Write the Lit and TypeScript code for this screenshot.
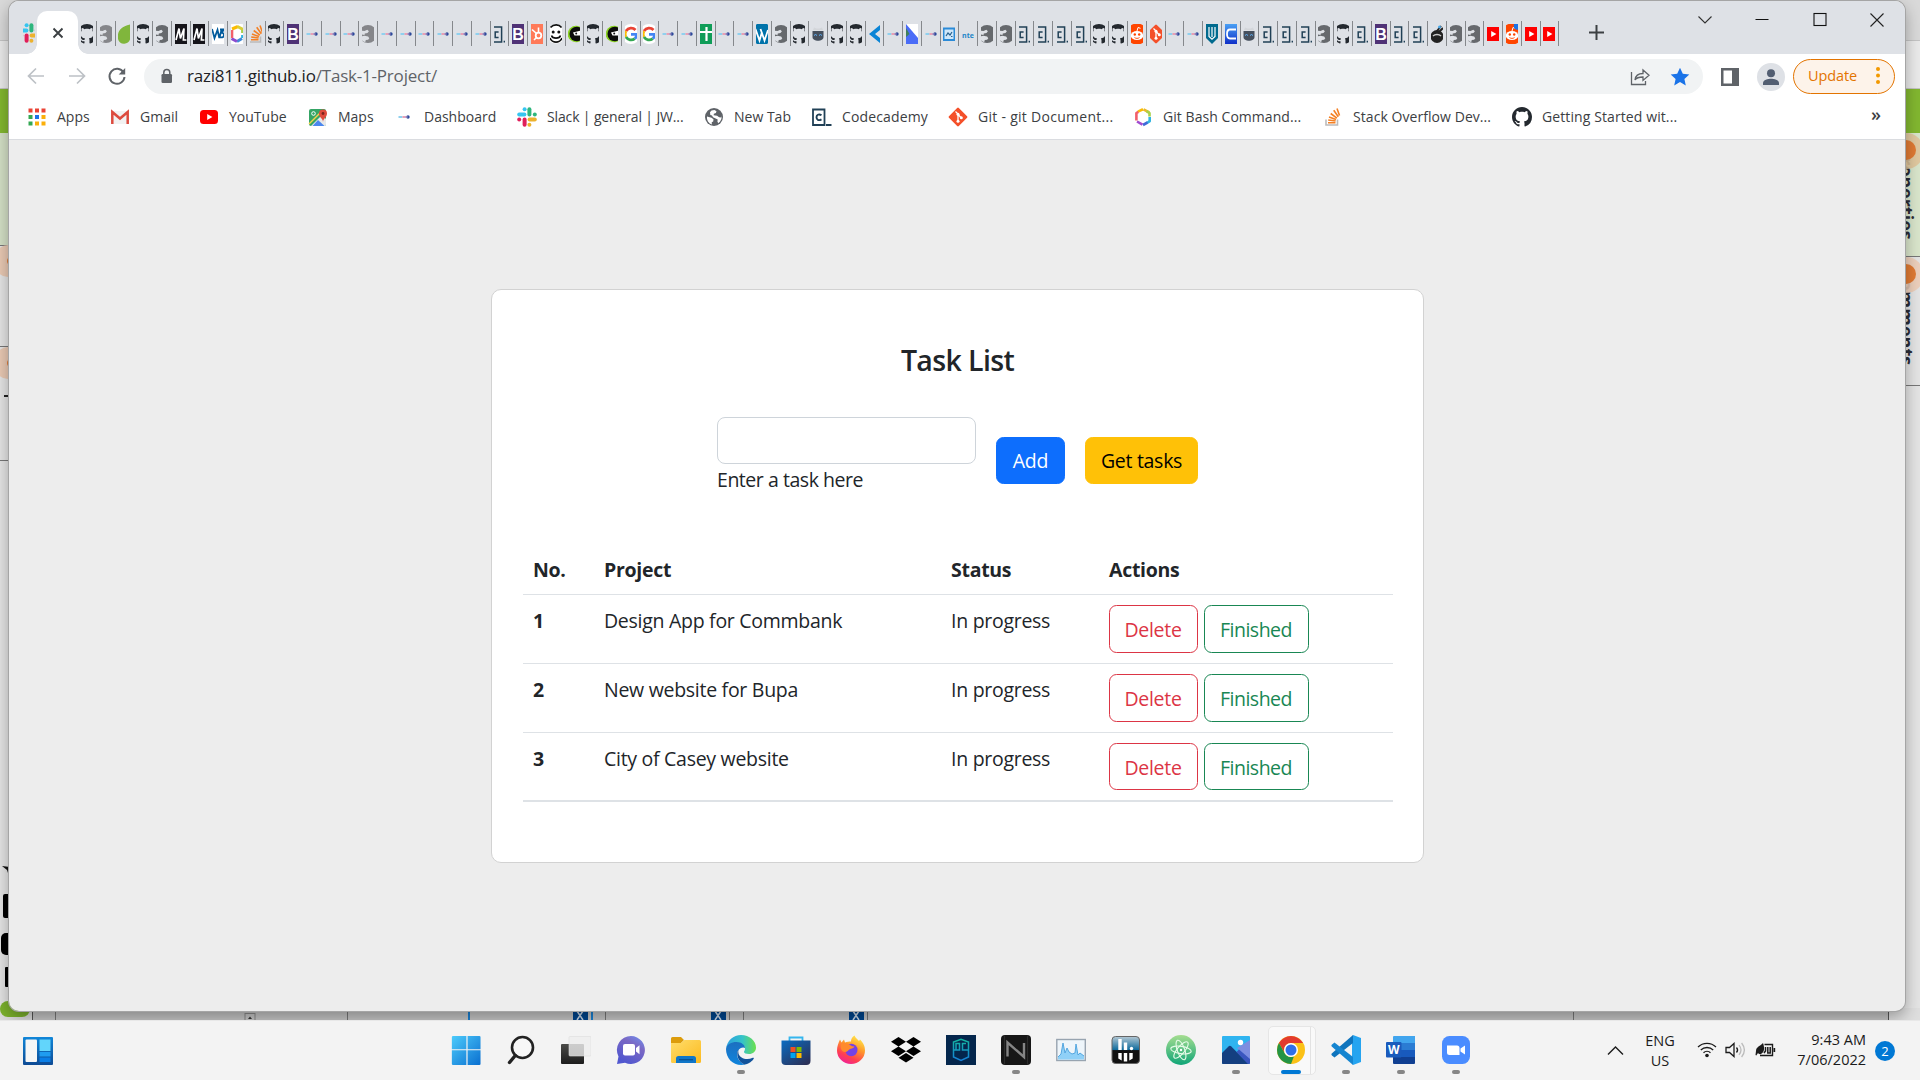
import { LitElement, html, css, svg } from "lit";
import { customElement, state } from "lit/decorators.js";
import { classMap } from "lit/directives/class-map.js";
import { styleMap } from "lit/directives/style-map.js";

const S = (body: unknown, w = 20, h = w, vb = `0 0 ${w} ${h}`) =>
  html`<svg width=${w} height=${h} viewBox=${vb} fill="none">${body}</svg>`;

const catPath =
  "M8 0C3.58 0 0 3.58 0 8c0 3.54 2.29 6.53 5.47 7.59.4.07.55-.17.55-.38 0-.19-.01-.82-.01-1.49-2.01.37-2.53-.49-2.69-.94-.09-.23-.48-.94-.82-1.13-.28-.15-.68-.52-.01-.53.63-.01 1.08.58 1.23.82.72 1.21 1.87.87 2.33.66.07-.52.28-.87.51-1.07-1.78-.2-3.64-.89-3.64-3.95 0-.87.31-1.59.82-2.15-.08-.2-.36-1.02.08-2.12 0 0 .67-.21 2.2.82.64-.18 1.32-.27 2-.27.68 0 1.36.09 2 .27 1.53-1.04 2.2-.82 2.2-.82.44 1.1.16 1.92.08 2.12.51.56.82 1.27.82 2.15 0 3.07-1.87 3.75-3.65 3.95.29.25.54.73.54 1.48 0 1.07-.01 1.93-.01 2.2 0 .21.15.46.55.38A8.013 8.013 0 0 0 16 8c0-4.42-3.58-8-8-8z";

const globe = (c: string) => svg`
  <circle cx="10" cy="10" r="9" fill=${c}/>
  <path d="M3 9.500l4.500 1.200 2 1.600-.3 2.200-1.500.8.200 2.200C5 16.500 2.500 13.500 3 9.500z" fill="#fff"/>
  <path d="M6 5.200l1.500-1.700 3-.6 2 1.300-.6 1.800-2 .8-.3 1.500 3.500.5 2 1.500 2.400.2.300-2.500c.3 3.500-1 6.500-3.600 8.300l-.8-1.800.3-2-2-.9-2.700-1.300-1-1.800-1.700-.6z" fill="#fff"/>`;

/* Narrow-tab globe: the land reads as two notches cut from the left. */
const globeTab = (c: string) => svg`
  <circle cx="10" cy="10" r="9" fill=${c}/>
  <path d="M3 6.500l3.500.6 2.800-1.300 1.600 1.400-1.400 1.900-2.700.5-.3 1.400-3.500-.6z" fill="#dee1e6"/>
  <path d="M3 12.500l3.500-.8 3.600.9 1.200 1.600-1.200 1.600-2.300.2-.6 2.200L3 16z" fill="#dee1e6"/>`;

const reddit = (extra: unknown) => svg`<circle cx="10" cy="10" r="10.500" fill="#ff4500"/><ellipse cx="10" cy="11.500" rx="6.200" ry="4.600" fill="#fff"/><circle cx="7.800" cy="10.500" r="1.200" fill="#ff4500"/><circle cx="12.200" cy="10.500" r="1.200" fill="#ff4500"/><path d="M10 7l1-3.500 2.500.8" stroke="#fff" stroke-width="1"/><path d="M7.500 13.500c1.500 1.200 3.500 1.200 5 0" stroke="#ff4500" stroke-width=".9"/>${extra}`;

const ICONS: Record<string, unknown> = {
  slack: svg`
    <path d="M2.200 7.400h5.200" stroke="#36c5f0" stroke-width="4" stroke-linecap="round"/><circle cx="7.600" cy="2.200" r="2" fill="#36c5f0"/>
    <path d="M12.400 2.200v5.200" stroke="#2eb67d" stroke-width="4" stroke-linecap="round"/><circle cx="17.800" cy="7.400" r="2" fill="#2eb67d"/>
    <path d="M12.600 12.600h5.200" stroke="#ecb22e" stroke-width="4" stroke-linecap="round"/><circle cx="12.400" cy="17.800" r="2" fill="#ecb22e"/>
    <path d="M7.600 12.600v5.200" stroke="#e01e5a" stroke-width="4" stroke-linecap="round"/><circle cx="2.200" cy="12.600" r="2" fill="#e01e5a"/>`,
  octo: svg`<path transform="scale(1.25)" d=${catPath} fill="#24292f"/>`,
  globe: globe("#5f6368"),
  globeT: globeTab("#66696d"),
  globeL: globeTab("#85868a"),
  leaf: svg`<path d="M16.500.5C6 3 3.500 8 3.800 13.500c.2 4 3 6.500 6.500 6.300 4-.2 6.300-3 6.200-8z" fill="#80b63c"/>`,
  m: svg`<rect width="20" height="20" fill="#15141a"/><path d="M5 16L8 4.500l1.400 10L13 4.500l-.6 11.500h3" stroke="#fff" stroke-width="1.700"/>`,
  w3: svg`<rect width="20" height="20" fill="#fff"/><path d="M4 5l2.500 9L9.500 6l1.800 8 2.500-9M12 5.500h4l-2.500 3.200c4 .3 2.500 6-1 4.500" stroke="#005a9c" stroke-width="1.800"/>`,
  hex: svg`<g stroke-width="2.600" stroke-linejoin="round">
    <path d="M10 2.300L5 4.600" stroke="#fbbc04"/><path d="M10.500 2.300l5.800 3.200" stroke="#e8b92b"/><path d="M13.500 4.200l3 1.800v3.500" stroke="#a8d14a"/>
    <path d="M16.700 10v4.200L14 16" stroke="#2fb4e0"/><path d="M14.500 15.500L10 18" stroke="#3f6ad8"/>
    <path d="M9.500 17.700L4 14.500" stroke="#a24ccf"/><path d="M3.400 13.500V6l2-1.200" stroke="#f2606a"/></g>`,
  hexT: svg`<rect width="20" height="20" rx="6" fill="#fff"/><g stroke-width="3">
    <path d="M11 2.500L5 5" stroke="#fbbc04"/><path d="M10.500 2.500l5.500 3" stroke="#d8cf3a"/>
    <path d="M15 14.500L10 17.500" stroke="#3f8ad8"/><path d="M10 17.500L4.500 14.500" stroke="#8a4ccf"/><path d="M4.800 14V6" stroke="#f2606a"/><path d="M15.600 6v3" stroke="#a8d14a"/><path d="M15.600 11v3" stroke="#2fb4e0"/></g>`,
  so: svg`<path d="M3 12.500V18h11.500v-5.500" stroke="#bcbbbb" stroke-width="1.600"/><path d="M5 15.700h7.500M5.200 13l7.400 1M6 10l7 2.600M7.700 6.500l6.200 4.600M10.700 3.200l4.600 6.500M14 1.500l2.500 7" stroke="#f48024" stroke-width="1.600"/>`,
  b: svg`<rect width="20" height="20" fill="#4f3276"/><text x="10" y="15.800" text-anchor="middle" class="gB">B</text>`,
  dash: svg`<path d="M4.500 10h4" stroke="#8fd0ee" stroke-width="1.800"/><path d="M8.500 10h3" stroke="#e9a0b4" stroke-width="1.800"/><circle cx="14" cy="10" r="1.700" fill="#2b4a9b"/><path d="M11 10h3" stroke="#9a7bb8" stroke-width="1"/>`,
  ca: svg`<path d="M1 2.500h11.500v15.500H1z" stroke="#204056" stroke-width="1.800"/><path d="M9.500 8.200C6.500 6.500 4.500 8 4.500 10.300s2 3.800 5 2.100" stroke="#204056" stroke-width="1.900"/><path d="M14 18h5.500" stroke="#204056" stroke-width="1.800"/>`,
  caT: svg`<path d="M5 3h7.600v15H5" stroke="#204056" stroke-width="1.500"/><path d="M9.600 8H6.200v5.500h3.400" stroke="#204056" stroke-width="1.500"/><path d="M14.600 17.600h1.400" stroke="#204056" stroke-width="1.600"/>`,
  hub: svg`<rect width="20" height="20" fill="#ff7a59"/><circle cx="11.500" cy="11.500" r="2.800" stroke="#fff" stroke-width="1.800"/><path d="M11.500 8.500V3.500M9.500 9.500L5 5.500M9.500 13.500L7 16" stroke="#fff" stroke-width="1.600"/>`,
  face: svg`<circle cx="10" cy="10" r="9.600" fill="#fff"/><path d="M4.500 3.500C7.500 0 13 0 15.500 3.500M4 14c2 5.500 10 5.500 12 0M5.500 11.500c1 3.500 8 3.500 9 0" stroke="#111" stroke-width="1.600"/><circle cx="7.200" cy="8" r="1.500" fill="#111"/><circle cx="12.800" cy="8" r="1.500" fill="#111"/>`,
  ninja: svg`<circle cx="12" cy="10" r="8.300" fill="#8ad024"/><circle cx="12.800" cy="10" r="7.300" fill="#0c0c0c"/><path d="M9 8.500L17 6.500v5h-6.500z" fill="#fff"/><circle cx="12.200" cy="9.500" r="1" fill="#111"/>`,
  g: svg`<circle cx="10" cy="10" r="10" fill="#fff"/><g stroke-width="2.800"><path d="M14.500 6A6 6 0 0 0 5 7" stroke="#ea4335"/><path d="M5 7a6 6 0 0 0 0 6" stroke="#fbbc04"/><path d="M5 13a6 6 0 0 0 8.800 1.700" stroke="#34a853"/><path d="M10 10.300h5.800c0 2-.8 3.400-2 4.400" stroke="#4285f4"/></g>`,
  sheets: svg`<rect width="20" height="20" fill="#0f9d58"/><path d="M10.500 3v14M4 8h12" stroke="#fff" stroke-width="2.200"/>`,
  wp: svg`<circle cx="10" cy="10" r="11" fill="#0073aa"/><path d="M3.500 5l4 11.500L10 8M8.500 5l4 11.500L16 6" stroke="#fff" stroke-width="1.800"/>`,
  cat: svg`<path d="M4.500 7h11v6c0 5-11 5-11 0z" fill="#46505e"/><path d="M5 6l1-2.500 2.500 1h3L14 3.500 15 6z" fill="#d3d6da"/><path d="M6 11.500l1.500-1 1.500 1M11 11.500l1.500-1 1.500 1" stroke="#5fb4ff"/>`,
  vs: svg`<path d="M16 1L5 10l11 9v-5l-5-4 5-4z" fill="#0a84d6"/>`,
  blue: svg`<rect x="4" width="12" height="20" fill="#fff"/><path d="M4 0l12 14v6H4z" fill="#4a6cf7"/><path d="M4 4l3.500 6L4 13z" fill="#3f7f5c"/>`,
  img: svg`<rect x="4.500" y="4.500" width="11" height="11.500" fill="#cfe7fa" stroke="#2b8bd8" stroke-width="2"/><path d="M7 12l2-3 2 2 2-3M12 12.500h1.500" stroke="#28618f" stroke-width="1.200"/>`,
  nte: svg`<text x="10" y="13.500" text-anchor="middle" class="gN">nte</text>`,
  reddit: reddit(""),
  redditN: reddit(svg`<circle cx="15.500" cy="2" r="3.800" fill="#1a73e8"/>`),
  git: svg`<rect x="3" y="3" width="14" height="14" rx="1.200" transform="rotate(45 10 10)" fill="#f4502a"/><path d="M7.500 4.500L10 7v8M10 7.500l3.200 3.200" stroke="#fff" stroke-width="1.300"/><circle cx="10" cy="7.300" r="1.500" fill="#fff"/><circle cx="10" cy="14.200" r="1.500" fill="#fff"/><circle cx="13.300" cy="10.700" r="1.500" fill="#fff"/>`,
  shield: svg`<path d="M4 0h12v14l-6 6-6-6z" fill="#006a8e"/><path d="M7 3v9.500l3 2.800 3-2.800V3" stroke="#fff" stroke-width="1.200"/><path d="M10 3v10" stroke="#fff" stroke-width="1.200"/>`,
  c: svg`<defs><linearGradient id="cg" x2="0" y2="1"><stop stop-color="#4aa0f4"/><stop offset="1" stop-color="#1030c8"/></linearGradient></defs><rect width="20" height="20" fill="url(#cg)"/><path d="M15 5.500H9C5 5.500 5 14.500 9 14.500h6" stroke="#fff" stroke-width="1.800"/>`,
  bug: svg`<circle cx="10" cy="12.500" r="6.500" fill="#222"/><path d="M6 12c2-2 6-2 8 0" stroke="#c9c9c9" stroke-width="1.500"/><path d="M10 7l4-5M12 8l4-4" stroke="#222" stroke-width="2"/><circle cx="12.500" cy="3" r="1.500" fill="#4aa8e8"/>`,
  yt: svg`<rect x="1" y="3" width="18" height="14" rx="3.500" fill="#f00"/><path d="M8.200 7l5.200 3-5.200 3z" fill="#fff"/>`,
  apps: svg`<g><path d="M1.500 1.500h4v4h-4zM8 1.500h4v4H8zM14.500 1.500h4v4h-4z" fill="#ea4335"/><path d="M1.500 8h4v4h-4zM1.500 14.500h4v4h-4z" fill="#34a853"/><path d="M8 8h4v4H8z" fill="#1a73e8"/><path d="M14.500 8h4v4h-4zM8 14.500h4v4H8zM14.500 14.500h4v4h-4z" fill="#fbaf0a"/></g>`,
  gmail: svg`<path d="M1 4h18v13H1z" fill="#f2f2f2"/><path d="M2.300 17V5l7.700 6.500L17.700 5v12" stroke="#dd4b3e" stroke-width="2.500"/>`,
  maps: svg`<rect x="1" y="2" width="17" height="17" rx="2" fill="#35a565"/><path d="M3 19L14 8l4 4v5c0 1.500-.6 2-2 2z" fill="#e8e8e8"/><path d="M4.500 19l5.500-6 6.500 6z" fill="#4b87ee"/><path d="M1 17L14 4" stroke="#f6d24a" stroke-width="1.500"/><path d="M15 15c0-3.500-4-4.500-4-8.500a4 4 0 0 1 8 0c0 4-4 5-4 8.500z" fill="#de4b3c"/><circle cx="15" cy="6.500" r="1.400" fill="#7b231d"/><circle cx="5.500" cy="6.500" r="1.800" stroke="#fff"/>`,
};

const TABS =
  "octo globeL leaf octo globeT m m w3 hexT so octo b dash dash dash globeL dash dash dash dash dash dash caT b hub face ninja octo ninja g g dash dash sheets dash dash wp globeT octo cat octo octo vs dash blue dash img nte globeT globeT caT caT caT caT octo octo reddit git dash dash shield c cat caT caT caT globeT octo caT b caT caT bug globeT globeT yt redditN yt yt".split(" ");

interface Mark { icon: string; label: string; spacing?: number }

const MARKS: Mark[] = [
  { icon: "apps", label: "Apps" },
  { icon: "gmail", label: "Gmail" },
  { icon: "yt", label: "YouTube" },
  { icon: "maps", label: "Maps" },
  { icon: "dash", label: "Dashboard" },
  { icon: "slack", label: "Slack | general | JW...", spacing: -0.14 },
  { icon: "globe", label: "New Tab" },
  { icon: "ca", label: "Codecademy", spacing: 0.14 },
  { icon: "git", label: "Git - git Document...", spacing: 0.28 },
  { icon: "hex", label: "Git Bash Command...", spacing: 0.05 },
  { icon: "so", label: "Stack Overflow Dev...", spacing: 0.06 },
  { icon: "octo", label: "Getting Started wit...", spacing: 0.1 },
];

const APPS: [string, unknown, string][] = [
  ["start", svg`<defs><linearGradient id="ws" x2="1" y2="1"><stop stop-color="#4ccbfb"/><stop offset="1" stop-color="#0a6fd0"/></linearGradient></defs><path d="M.5 2a1 1 0 0 1 1-1h10.900v13.300H.5zM13.400 1H23a1 1 0 0 1 1 1v12.300H13.400zM.5 15.300h11.900V30H1.500a1 1 0 0 1-1-1zM13.400 15.300H24V29a1 1 0 0 1-1 1h-9.600z" transform="translate(0 0) scale(1.220 1) translate(.2 0)" fill="url(#ws)"/>`, ""],
  ["search", svg`<circle cx="16.500" cy="12.500" r="10.500" stroke="#222" stroke-width="2.600" fill="#f7f7f7"/><path d="M9.300 20.500L3.500 27.500" stroke="#222" stroke-width="3.400" stroke-linecap="round"/>`, ""],
  ["view", svg`<defs><linearGradient id="tv" x2="0" y2="1"><stop stop-color="#4a4a48"/><stop offset="1" stop-color="#1c1c1c"/></linearGradient></defs><rect y="9" width="23" height="20" rx="1" fill="url(#tv)"/><rect x="8" y="1.500" width="22" height="19.500" rx="1" fill="#eee" fill-opacity=".8" stroke="#ddd" stroke-width=".6"/>`, ""],
  ["chat", svg`<defs><linearGradient id="ch" x1="1" x2=".4" y2="1"><stop stop-color="#6f94f3"/><stop offset=".4" stop-color="#7a68c4"/><stop offset="1" stop-color="#5157cf"/></linearGradient></defs><path d="M15 1a14 14 0 1 1-6 26.700L1 29l1.500-7.500A14 14 0 0 1 15 1z" fill="url(#ch)"/><rect x="7" y="9" width="12" height="11.500" rx="2" fill="#fff"/><path d="M20 13l3.500-2.800v9L20 16.500z" fill="#fff"/>`, ""],
  ["files", svg`<defs><linearGradient id="fe" x2="1" y2="1"><stop stop-color="#ffdd6b"/><stop offset="1" stop-color="#fcba1f"/></linearGradient></defs><path d="M0 8V3.500A1.500 1.500 0 0 1 1.500 2H10l3 3-3 3z" fill="#dc9c0c"/><path d="M0 8h10l3.500-3H28.500A1.500 1.500 0 0 1 30 6.500V26.500a1.500 1.500 0 0 1-1.500 1.500h-27A1.500 1.500 0 0 1 0 26.500z" fill="url(#fe)"/><path d="M5 28v-4.500A2.500 2.500 0 0 1 7.500 21h15a2.500 2.500 0 0 1 2.500 2.500V28z" fill="#0f76c8"/><path d="M8 24.700h14" stroke="#0a4e8e" stroke-width="1.200"/>`, ""],
  ["edge", svg`<defs><linearGradient id="e1" x2="1"><stop stop-color="#2a9fe0"/><stop offset=".55" stop-color="#35c3c8"/><stop offset="1" stop-color="#6be04c"/></linearGradient><linearGradient id="e2" x2="0" y2="1"><stop stop-color="#1c6fc0"/><stop offset="1" stop-color="#0f84dc"/></linearGradient></defs><path d="M0 14C1 5.500 7.500 0 15 0c8.500 0 15 6 15 12.500 0 4-3 6.500-7 6.500-3 0-5-1-5-2s1-1.500 1-3.500-3-5.500-8-5.500c-6 0-10.500 3-11 6z" fill="url(#e1)"/><path d="M0 14C.5 9.500 5.500 7 10.500 7c5 0 8.500 3 8.500 6-3-2-8 1.500-8 6 0 5 4 9.500 8.500 10.500C8.500 32 0 24.500 0 14z" fill="url(#e2)"/><path d="M12.500 14C9.500 19 12 27 18.500 29.500c4.500-.5 8-3.500 9.300-6 .3-.6-.3-1-1-.7-6 2.700-13 .7-14.300-4.300-.3-1.500-.3-3 0-4.500z" fill="#12539b"/>`, "run"],
  ["store", svg`<defs><linearGradient id="st" x2=".8" y2="1"><stop stop-color="#0a6cc2"/><stop offset="1" stop-color="#2b3158"/></linearGradient></defs><path d="M8.500 6V2.500h13V6" stroke="#35b6ee" stroke-width="1.800"/><path d="M.5 5.500h29V26c0 2.500-1.500 4-4 4h-21c-2.500 0-4-1.500-4-4z" fill="url(#st)"/><path d="M9.500 12h5v5h-5z" fill="#f25022"/><path d="M15.500 12h5v5h-5z" fill="#7fba00"/><path d="M9.500 18h5v5h-5z" fill="#00a4ef"/><path d="M15.500 18h5v5h-5z" fill="#ffb900"/>`, ""],
  ["fox", svg`<defs><linearGradient id="ff" x1=".8" x2=".3" y2="1"><stop stop-color="#fff14f"/><stop offset=".4" stop-color="#ff9a2a"/><stop offset=".75" stop-color="#ff3f50"/><stop offset="1" stop-color="#f0219a"/></linearGradient></defs><path d="M18.500.5c1 2.500 3 3.700 4.500 5.500l1-1.500c4 4 5 7.500 5 11A14 13.500 0 0 1 1 15.500C1 11.500 2.500 7.500 4 4.500l1.500 3L8 4.500l1 3c2-1 4-1 6-1 0-2.500 1-4.500 3.500-6z" fill="url(#ff)"/><circle cx="15.300" cy="15" r="6.200" fill="#7542e5"/><path d="M5 9c4-2 7-1 9 1 1.500 1 3 1.500 4.500 1.500-1 2-3 2-4.500 2.500-2 1-2.500 3-5 3C5.500 17 4 13 5 9z" fill="#ff8a2c"/>`, ""],
  ["drop", svg`<path d="M7.500 2l7.500 4.700-7.500 4.700L0 6.700zM22.500 2L30 6.700l-7.500 4.700L15 6.700zM7.500 11.600l7.500 4.700L7.500 21 0 16.300zM22.500 11.600l7.500 4.700-7.500 4.700-7.500-4.700zM15 18l7.500 4.700L15 27.400l-7.500-4.700z" fill="#000"/>`, ""],
  ["pg", svg`<defs><linearGradient id="pg" gradientUnits="userSpaceOnUse" x1="0" x2="0" y1="4" y2="26"><stop stop-color="#14b8a0"/><stop offset="1" stop-color="#147dd8"/></linearGradient></defs><rect width="30" height="30" fill="#04264c"/><path d="M7.500 19V7l7.500-2.800L22.500 7v15L15 25.500 7.500 22v-3M7.500 15h6V8.500h-3.500V15M22.500 15h-6V8.500h3.500" stroke="url(#pg)" stroke-width="1.500"/>`, ""],
  ["n", svg`<rect width="30" height="30" rx="4" fill="#161616"/><path d="M3.500 1v28M26.500 1v28" stroke="#2b2b2b" stroke-width="1.200"/><path d="M6.500 21.500V7.500L23 22V8" stroke="#858585" stroke-width="2.400"/>`, "run"],
  ["mon", svg`<rect x=".8" y="4.500" width="28.500" height="21" fill="#eef5fa" stroke="#98a4b0" stroke-width="1.400"/><path d="M2 22l3-3 2-11 2 10 2-5 2 4 3 2 3-1 1-9 2 11 2-2 4 3v3.500H2z" fill="#8fd0f7"/><path d="M2 22l3-3 2-11 2 10 2-5 2 4 3 2 3-1 1-9 2 11 2-2 4 3" stroke="#4aa0dc" stroke-width=".9"/>`, ""],
  ["bars", svg`<defs><linearGradient id="br" x2="0" y2="1"><stop stop-color="#b4c8d4"/><stop offset=".5" stop-color="#0d6a9c"/><stop offset=".52" stop-color="#111"/></linearGradient></defs><rect x="1" y="1.500" width="27.500" height="27" rx="3.500" fill="url(#br)" stroke="#666"/><path d="M9 4v11M14.500 7.500V15" stroke="#fff" stroke-width="3.400"/><circle cx="20.500" cy="13.500" r="1.700" fill="#fff"/><path d="M7.300 18v5.500l3.400 2V18zM12.800 18v8.500h3.400V18zM21.700 18v5.500l-3.400 2V18z" fill="#fff"/>`, ""],
  ["atom", svg`<defs><linearGradient id="at" x2="0" y2="1"><stop stop-color="#a5dd90"/><stop offset="1" stop-color="#0fa577"/></linearGradient></defs><circle cx="15" cy="15" r="15" fill="url(#at)"/><g stroke="#e6fbe8" stroke-width="1.100"><ellipse cx="15" cy="15" rx="3.700" ry="10.300" transform="rotate(-20 15 15)"/><ellipse cx="15" cy="15" rx="3.700" ry="10.300" transform="rotate(40 15 15)"/><ellipse cx="15" cy="15" rx="3.700" ry="10.300" transform="rotate(98 15 15)"/></g><circle cx="15" cy="15" r="1.200" fill="#fff"/>`, ""],
  ["photo", svg`<rect x="1" y="1" width="28" height="28" rx="1" fill="#2fb4f0"/><path d="M29 5v20L16 13z" fill="#7d8ee0"/><path d="M1 18l6.500-6.500a2 2 0 0 1 2.800 0L27.500 29H2a1 1 0 0 1-1-1z" fill="#143f80"/><path d="M15.500 17l2.500-2.500L29 24v4a1 1 0 0 1-1 1h-1z" fill="#3b56bf"/><circle cx="19.500" cy="7.500" r="2.700" fill="#fff"/>`, "run"],
  ["chrome", svg`<circle cx="15" cy="15" r="14" fill="#fbc116"/><path d="M2.900 8A14 14 0 0 1 27.100 8H15a7 7 0 0 0-6.500 9.500z" fill="#e33b2e"/><path d="M2.900 8l6 10.500A7 7 0 0 0 18 21.300L15 29A14 14 0 0 1 2.900 8z" fill="#249445"/><circle cx="15" cy="15" r="7" fill="#fff"/><circle cx="15" cy="15" r="5.500" fill="#2f6fe8"/>`, "active"],
  ["code", svg`<path d="M22 0l8 3v24l-8 3-1-3V3z" fill="#25a4f0"/><path d="M22 0v8L3.500 22.500 1 20.500c-.8-.7-.8-1.500 0-2.200z" fill="#0f74bd"/><path d="M22 30v-8L3.500 7.500 1 9.500c-.8.700-.8 1.500 0 2.200z" fill="#1585d0"/>`, "run"],
  ["word", svg`<path d="M8 1h21v7H7V2a1 1 0 0 1 1-1z" fill="#41a5ee"/><path d="M7 8h22v7H7z" fill="#2b7cd3"/><path d="M7 15h22v7H7z" fill="#185abd"/><path d="M7 22h22v6a1 1 0 0 1-1 1H8a1 1 0 0 1-1-1z" fill="#103f91"/><rect y="7" width="15.500" height="15.500" rx="1" fill="#1a5bbc"/><text x="7.700" y="19" text-anchor="middle" class="gW">W</text>`, "run"],
  ["zoom", svg`<rect x="1" y="1" width="28" height="28" rx="7.500" fill="#4a8cff"/><path d="M6 10.500h10a2.500 2.500 0 0 1 2.500 2.500v7H8.500A2.500 2.500 0 0 1 6 17.500zM19.500 13.500l4.500-3v9l-4.500-3z" fill="#fff"/>`, "run"],
];

interface Task { name: string; status: string }

@customElement("app-root")
export class AppRoot extends LitElement {
  static styles = css`
    :host { display: block; width: 1920px; height: 1080px; overflow: hidden; font-family: "Open Sans", "Noto Sans", sans-serif; color: #212529; }
    * { box-sizing: border-box; }
    svg { display: block; flex: none; }
    .gB { font: 700 16px "Liberation Sans", sans-serif; fill: #fff; }
    .gN { font: 700 7px "Open Sans", sans-serif; fill: #1f86c8; }
    .gW { font: 700 12px "Open Sans", sans-serif; fill: #fff; }
    .desktop { position: relative; width: 1920px; height: 1080px; display: flex; flex-direction: column; justify-content: flex-end; overflow: hidden; background: #e4e4e4; }
    .backdrop { position: absolute; left: 0; top: 0; }
    .side { position: absolute; writing-mode: vertical-rl; font-weight: 700; font-size: 18px; line-height: 20px; color: #2c2c34; left: 1897px; }
    .side.p { top: 146px; } .side.c { top: 268px; }
    .window { position: absolute; left: 9px; top: 1px; width: 1896px; height: 1010px; border-radius: 10px; background: #ededed; overflow: hidden; display: flex; flex-direction: column; }
    .shade { position: absolute; left: 9px; top: 1px; width: 1896px; height: 1010px; border-radius: 10px; box-shadow: 0 0 0 1px #a5a5a5, 0 6px 16px rgba(0,0,0,.33); }
    .tabs { height: 53px; flex: none; background: #dee1e6; display: flex; align-items: flex-start; }
    .pin { width: 28px; height: 53px; padding-top: 11px; display: flex; align-items: center; justify-content: flex-end; padding-right: 2px; }
    .clip { width: 12px; height: 20px; overflow: hidden; display: flex; justify-content: center; flex: none; }
    .active { width: 41px; height: 43px; margin-top: 10px; background: #fff; border-radius: 10px 10px 0 0; display: flex; align-items: center; justify-content: center; position: relative; }
    .active::before, .active::after { content: ""; position: absolute; bottom: 0; width: 10px; height: 10px; }
    .active::before { left: -10px; background: radial-gradient(circle at 0 0, transparent 9.500px, #fff 10px); }
    .active::after { right: -10px; background: radial-gradient(circle at 100% 0, transparent 9.500px, #fff 10px); }
    .strip { display: flex; padding-top: 20px; position: relative; }
    .tab { width: 18.756px; height: 25px; display: flex; align-items: center; justify-content: center; border-right: 1px solid #85888c; flex: none; }
    .plus { padding: 24px 0 0 30px; }
    .caps { margin-left: auto; display: flex; padding: 10px 20px 0 0; gap: 41.300px; }
    .bar { height: 44px; flex: none; background: #fff; display: flex; align-items: center; padding: 0 9px 0 17px; }
    .nav { display: flex; gap: 20.500px; width: 118px; }
    .omni { width: 1559px; height: 35px; border-radius: 18px; background: #f1f3f4; display: flex; align-items: center; padding: 0 13px 0 15px; font-size: 17px; letter-spacing: -.2px; color: #5f6368; margin-top: 1px; }
    .url { margin: -2px 0 0 13px; flex: 1; }
    .url b { font-weight: 400; color: #202124; }
    .omniact { display: flex; gap: 20px; }
    .tools { display: flex; align-items: center; margin-left: 18px; margin-top: 1px; }
    .tools .ava { margin: 0 8px 0 18px; }
    .upd { width: 102px; height: 35px; border: 1.500px solid #e37400; border-radius: 18px; background: #fdf3ea; color: #e37400; display: flex; align-items: center; justify-content: space-between; padding: 0 14px 2px 14px; font-size: 14.500px; letter-spacing: -.1px; white-space: nowrap; }
    .marks { height: 42px; flex: none; background: #fff; border-bottom: 1px solid #dadce0; display: grid; grid-template-columns: 83px 89px 109px 86px 123px 187px 108px 136px 185px 190px 189px 1fr auto; padding: 0 24px 2px 18px; align-items: center; font-size: 14px; color: #3c4043; }
    .mark { display: flex; align-items: center; gap: 10px; white-space: nowrap; margin-top: -1px; }
    .mark span { margin-top: -1px; }
    .more { font-size: 18px; line-height: 20px; font-weight: 600; padding-bottom: 7px; }
    .page { flex: 1; padding-top: 149px; display: flex; align-items: flex-start; justify-content: center; font-size: 19.500px; letter-spacing: -.28px; line-height: 30px; }
    .card { width: 933px; height: 574px; background: #fff; border: 1px solid #d2d2d2; border-radius: 10px; padding: 52px 30px 0 31px; display: flex; flex-direction: column; }
    h4 { margin: 0; font-size: 28.500px; letter-spacing: -.62px; font-weight: 600; line-height: 36px; text-align: center; }
    .form { display: flex; justify-content: center; gap: 20px; margin-top: 39px; height: 127px; align-items: flex-start; }
    .field { width: 259px; }
    input { display: block; width: 259px; height: 47px; border: 1px solid #ced4da; border-radius: 8px; background: #fff; outline: none; }
    .field label { display: block; margin-top: 1px; letter-spacing: -.46px; }
    .btn { font: inherit; letter-spacing: inherit; height: 47px; border-radius: 7.500px; border: 1px solid; background: #fff; padding: 0; cursor: pointer; white-space: nowrap; }
    .form .btn { margin-top: 20px; }
    .add { width: 69px; background: #0d6efd; border-color: #0d6efd; color: #fff; }
    .get { width: 113px; background: #ffc107; border-color: #ffc107; color: #000; }
    .row { display: grid; grid-template-columns: 71px 347px 158px 294px; height: 69px; border-bottom: 1px solid #dee2e6; }
    .row > * { padding: 11px 0 0 10.500px; white-space: nowrap; }
    .row.head { height: 51px; font-weight: 700; }
    .row.last { border-bottom-width: 2px; }
    .no { font-weight: 700; }
    .row > .acts { display: flex; gap: 6px; align-items: flex-start; padding: 10px 0 0 10px; }
    .acts .btn { height: 48px; padding-top: 2px; }
    .row.last .btn { height: 47px; }
    .del { width: 89px; color: #dc3545; border-color: #dc3545; }
    .fin { width: 105px; color: #198754; border-color: #198754; letter-spacing: -.5px; }
    .taskbar { position: relative; height: 60px; background: #f3f3f3; display: flex; align-items: center; border-top: 1px solid #e8e8e8; padding-left: 23px; font-size: 14.500px; color: #1b1b1b; }
    .apps { display: flex; margin-left: 385.500px; height: 59px; }
    .app { width: 55px; display: flex; flex-direction: column; align-items: center; padding-top: 14px; position: relative; }
    .dot { width: 8px; height: 4px; border-radius: 2px; background: #868686; margin-top: 5px; }
    .dot.on { width: 20px; background: #0078d4; }
    .hot { position: absolute; left: 4px; top: 5px; width: 48px; height: 49px; border: 1px solid #e6e6e6; border-radius: 5px; background: #f9f9f9; }
    .hot::after { content: ""; position: absolute; right: 4px; top: 0; height: 47px; border-right: 1px solid #e2e2e2; }
    .app svg, .dot { z-index: 1; }
    .tray { margin-left: auto; display: flex; align-items: center; padding-right: 25px; line-height: 20px; }
    .lang { width: 40px; text-align: center; margin: 0 17px 0 16px; }
    .stat { display: flex; gap: 8px; margin-top: -1px; }
    .clock { width: 80px; text-align: right; margin: -2px 0 0 10px; white-space: nowrap; }
    .badge { width: 20px; height: 20px; border-radius: 50%; background: #0078d4; color: #fff; font-size: 13px; display: flex; align-items: center; justify-content: center; margin-left: 9px; }
  `;

  @state() private tasks: Task[] = [
    { name: "Design App for Commbank", status: "In progress" },
    { name: "New website for Bupa", status: "In progress" },
    { name: "City of Casey website", status: "In progress" },
  ];

  private backdrop() {
    return html`<svg class="backdrop" width="1920" height="1080" viewBox="0 0 1920 1080" fill="none">
      <rect width="1920" height="40" fill="#d9d9d9"/><rect y="40" width="1920" height="48" fill="#eaeaea"/>
      <path d="M0 40.500h1920M0 88.500h1920" stroke="#c4c4c4"/>
      <rect y="89" width="1920" height="44" fill="#82b730"/>
      <rect y="133" width="20" height="112" fill="#d3dfc5"/><rect x="1900" y="133" width="20" height="123" fill="#d9e5cb"/>
      <path d="M0 245.500h20M0 346.500h20M0 460.500h20M1900 256.500h20M1900 385.500h20" stroke="#777"/>
      <ellipse cx="8" cy="261" rx="14" ry="16" fill="#e8c8b2"/><circle cx="12" cy="261" r="5" fill="#e07a35"/>
      <ellipse cx="8" cy="363" rx="14" ry="16" fill="#e8c8b2"/><circle cx="12" cy="363" r="5" fill="#e07a35"/>
      <path d="M4 396h8" stroke="#222" stroke-width="2"/>
      <path d="M2 866l8 1v12l-3-9z" fill="#111"/>
      <rect x="3" y="894" width="10" height="24" rx="2" fill="#000"/><rect x="1" y="933" width="12" height="22" rx="5" fill="#000"/><rect x="5" y="967" width="8" height="20" rx="1" fill="#000"/>
      <rect y="1008" width="1920" height="12" fill="#c4c4c4"/><rect y="1008" width="32" height="12" fill="#dcdcdc"/><rect x="1889" y="1008" width="31" height="12" fill="#dedede"/>
      <rect y="1001" width="30" height="16" rx="8" fill="#7bb02c"/>
      <path d="M32.500 1009v11M1888.500 1009v11" stroke="#555"/>
      <path d="M55.500 1009v11M347.500 1009v11M605.500 1009v11M729.500 1009v11M743.500 1009v11M867.500 1009v11M1573.500 1009v11" stroke="#777"/>
      <path d="M469 1009v11M592 1009v11" stroke="#1a7fd0" stroke-width="2"/>
      <g fill="#00458c"><path d="M573 1009h15v11h-15zM711 1009h15v11h-15zM849 1009h15v11h-15z"/></g>
      <path d="M577 1011l6 9M583 1011l-6 9M715 1011l6 9M721 1011l-6 9M853 1011l6 9M859 1011l-6 9" stroke="#c9d6e4" stroke-width="1.500"/>
      <rect x="245" y="1013.500" width="10" height="8" stroke="#888"/><path d="M248 1019l2-2.500 2 2.500z" fill="#333"/>
    </svg>
    <div class="side p">Properties</div><div class="side c">Comments</div>
    <svg class="backdrop" width="1920" height="400" viewBox="0 0 1920 400">
      <circle cx="1906" cy="151" r="18" fill="#e0c49a" fill-opacity=".9"/><circle cx="1906" cy="150" r="10" fill="#e07a33"/>
      <circle cx="1906" cy="275" r="18" fill="#ecccb6" fill-opacity=".9"/><circle cx="1906" cy="274" r="10" fill="#e07a33"/>
    </svg>`;
  }

  private browser() {
    return html`
      <div class="tabs">
        <div class="pin"><div class="clip">${S(ICONS.slack)}</div></div>
        <div class="active">${S(svg`<path d="M1.500 1.500l9 9M10.500 1.500l-9 9" stroke="#3c4043" stroke-width="1.900"/>`, 12)}</div>
        <div class="strip">${TABS.map((t) => html`<div class="tab"><div class="clip">${S(ICONS[t])}</div></div>`)}</div>
        <div class="plus">${S(svg`<path d="M7.500 0v15M0 7.500h15" stroke="#3c4043" stroke-width="2"/>`, 15)}</div>
        <div class="caps">
          ${S(svg`<path d="M1.500 5.500L8 12l6.500-6.500" stroke="#333" stroke-width="1.100"/>`, 16)}
          ${S(svg`<path d="M1.500 8.500h13" stroke="#111"/>`, 16)}
          ${S(svg`<rect x="2" y="2.500" width="12" height="12" stroke="#111" stroke-width="1.100"/>`, 16)}
          ${S(svg`<path d="M1.500 2.500l13 13M14.500 2.500l-13 13" stroke="#222" stroke-width="1.100"/>`, 16)}
        </div>
      </div>
      <div class="bar">
        <div class="nav">
          ${S(svg`<path d="M18 10H3M10 2.500L2.500 10l7.500 7.500" stroke="#bdc1c6" stroke-width="1.700"/>`)}
          ${S(svg`<path d="M2 10h15M10 2.500l7.500 7.500-7.500 7.500" stroke="#bdc1c6" stroke-width="1.700"/>`)}
          ${S(svg`<path d="M16.500 6.500A7.500 7.500 0 1 0 17.500 11" stroke="#5f6368" stroke-width="2"/><path d="M18.200 2v6.500h-6.500z" fill="#5f6368"/>`)}
        </div>
        <div class="omni">
          ${S(svg`<rect x="2.500" y="6" width="10.500" height="9" rx="1.200" fill="#5f6368"/><path d="M4.800 7V4.500a3 3 0 0 1 6 0V7" stroke="#5f6368" stroke-width="1.500"/>`, 15, 17)}
          <div class="url"><b>razi811.github.io</b><span>/Task-1-Project/</span></div>
          <div class="omniact">
            ${S(svg`<path d="M1.500 5v12.500h14V14M5 13c.5-4.500 3-6.500 8-6.500V3l6 5.200-6 5.200V10c-4 0-6.500.5-8 3z" stroke="#5f6368" stroke-width="1.300"/>`)}
            ${S(svg`<path d="M10 .8l2.800 6 6.500.7-4.900 4.400 1.400 6.500L10 15.100l-5.800 3.300 1.400-6.500L.7 7.500l6.500-.7z" fill="#1a73e8"/>`)}
          </div>
        </div>
        <div class="tools">
          ${S(svg`<path d="M0 0h18v18H0z" fill="#5f6368"/><path d="M2.500 2.500h8.500v13H2.500z" fill="#fff"/>`, 18)}
          <div class="ava">${S(svg`<circle cx="14" cy="14" r="14" fill="#dee1e6"/><circle cx="14" cy="10.300" r="4" fill="#525e72"/><path d="M6 22v-2c0-3 5-4.300 8-4.300s8 1.300 8 4.300v2z" fill="#525e72"/>`, 28)}</div>
          <div class="upd"><span>Update</span>${S(svg`<circle cx="2" cy="2" r="2" fill="#f29900"/><circle cx="2" cy="8.500" r="2" fill="#f29900"/><circle cx="2" cy="15" r="2" fill="#f29900"/>`, 4, 17)}</div>
        </div>
      </div>
      <div class="marks">
        ${MARKS.map((m) => html`<div class="mark">${S(ICONS[m.icon])}<span style=${styleMap({ letterSpacing: `${m.spacing ?? 0}px` })}>${m.label}</span></div>`)}
        <span class="more">»</span>
      </div>`;
  }

  private remove(i: number) {
    this.tasks = this.tasks.filter((_, k) => k !== i);
  }

  render() {
    const last = this.tasks.length - 1;
    return html`<div class="desktop">
      ${this.backdrop()}
      <div class="shade"></div>
      <div class="window">
        ${this.browser()}
        <div class="page"><div class="card">
          <h4>Task List</h4>
          <div class="form">
            <div class="field"><input type="text" /><label>Enter a task here</label></div>
            <button class="btn add">Add</button><button class="btn get">Get tasks</button>
          </div>
          <div class="row head"><div>No.</div><div>Project</div><div>Status</div><div>Actions</div></div>
          ${this.tasks.map((t, i) => html`<div class=${classMap({ row: true, last: i === last })}>
            <div class="no">${i + 1}</div><div>${t.name}</div><div>${t.status}</div>
            <div class="acts"><button class="btn del" @click=${() => this.remove(i)}>Delete</button><button class="btn fin">Finished</button></div>
          </div>`)}
        </div></div>
      </div>
      <div class="taskbar">
        ${S(svg`<defs><linearGradient id="wg" x2="0" y2="1"><stop stop-color="#1186d8"/><stop offset="1" stop-color="#0d4a94"/></linearGradient></defs><rect y="1" width="30" height="28" rx="1" fill="url(#wg)"/><rect x="2.500" y="3.500" width="11.500" height="22.500" rx="1" fill="#f6f6f6"/><path d="M16.500 3.500h11V15h-11z" fill="#62d5fb"/><path d="M16.500 16h11v4.500h-11z" fill="#1f9cf0"/><path d="M16.500 21.500h11V26h-11z" fill="#0a7ee6"/>`, 30)}
        <div class="apps">${APPS.map(([, g, s]) => html`<div class="app">
          ${s === "active" ? html`<div class="hot"></div>` : ""}${S(g, 30)}${s ? html`<div class=${classMap({ dot: true, on: s === "active" })}></div>` : ""}</div>`)}</div>
        <div class="tray">
          ${S(svg`<path d="M1 11.500l7.500-7.500 7.500 7.500" stroke="#1b1b1b" stroke-width="1.400"/>`, 17, 16)}
          <div class="lang"><div>ENG</div><div>US</div></div>
          <div class="stat">
            ${S(svg`<path d="M1 8a13 13 0 0 1 18 0M3.800 11a9 9 0 0 1 12.400 0M6.500 13.800a5 5 0 0 1 7 0" stroke="#1b1b1b" stroke-width="1.300"/><circle cx="10" cy="16.500" r="1.800" fill="#1b1b1b"/>`, 20, 22)}
            ${S(svg`<path d="M1 8.500h3.500L9 4.500v13l-4.500-4H1z" stroke="#1b1b1b" stroke-width="1.300"/><path d="M11.500 8.500c1.300 1.500 1.300 3.500 0 5" stroke="#1b1b1b" stroke-width="1.300"/><path d="M14 6.200c2.500 3 2.500 6.600 0 9.600M16.600 4c3.600 4.500 3.600 9.500 0 14" stroke="#bbb" stroke-width="1.300"/>`, 22, 22)}
            ${S(svg`<path d="M9.500 5.500h8V16.500H5" stroke="#1b1b1b" stroke-width="1.400"/><path d="M18.500 9h1.700v4h-1.700zM1 12c0-4 3.500-4.500 7-8 1.500 4 2 9-2 11-1 .5-2.500 0-3-1l-1.700 2.500L.5 16z" fill="#1b1b1b"/><path d="M12.800 8v6h2.400V8M10.500 8v4l-1.500 2" stroke="#1b1b1b" stroke-width="1.500"/>`, 21, 22)}
          </div>
          <div class="clock"><div>9:43 AM</div><div>7/06/2022</div></div>
          <div class="badge">2</div>
        </div>
      </div>
    </div>`;
  }
}
